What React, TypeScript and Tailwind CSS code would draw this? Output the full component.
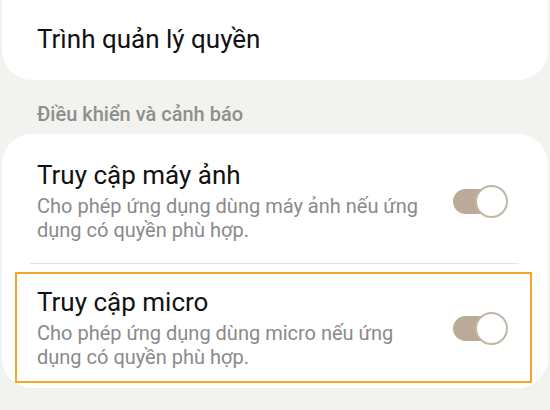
import React from "react";

const Toggle: React.FC = () => (
  <div className="relative w-[55px] h-[33px] shrink-0">
    <div className="absolute left-0 top-[4px] w-[44px] h-[25px] rounded-full bg-[#b9ab96]" />
    <div className="absolute right-0 top-0 w-[33px] h-[33px] rounded-full bg-white border-2 border-[#c2b6a5]" />
  </div>
);

interface RowProps {
  title: string;
  desc: string;
}

const RowContent: React.FC<RowProps> = ({ title, desc }) => (
  <>
    <div className="w-[395px]">
      <div className="text-[26px] leading-[30px] text-[#111111]">{title}</div>
      <div className="mt-[4px] text-[20px] leading-[24px] text-[#8a8a8a]">{desc}</div>
    </div>
    <Toggle />
  </>
);

export default function App() {
  return (
    <div
      className="w-[550px] h-[410px] overflow-hidden bg-[#f2f2ef]"
      style={{ fontFamily: "Roboto, 'Noto Sans', sans-serif" }}
    >
      {/* Permission manager card (top cut off) */}
      <div className="mx-[2px] h-[80px] rounded-b-[30px] bg-white flex items-center pl-[35px] pb-[2px]">
        <span className="text-[26px] text-[#111111]">Trình quản lý quyền</span>
      </div>

      {/* Section header */}
      <div className="pl-[37px] pt-[22px] pb-[8px] text-[20px] leading-[24px] font-medium text-[#8e8e8e]">
        Điều khiển và cảnh báo
      </div>

      {/* Controls card */}
      <div className="mx-[2px] rounded-[30px] bg-white pt-[26px] pb-[5px]">
        <div className="flex items-center justify-between pl-[35px] pr-[40px]">
          <RowContent
            title="Truy cập máy ảnh"
            desc="Cho phép ứng dụng dùng máy ảnh nếu ứng dụng có quyền phù hợp."
          />
        </div>
        <div className="ml-[28px] mr-[29px] mt-[21px] h-px bg-[#e3e3e3]" />
        <div className="ml-[13px] mr-[16px] mt-[8px] border-2 border-[#f4a62a] flex items-center justify-between pl-[20px] pr-[22px] pt-[13px] pb-[12px]">
          <RowContent
            title="Truy cập micro"
            desc="Cho phép ứng dụng dùng micro nếu ứng dụng có quyền phù hợp."
          />
        </div>
      </div>
    </div>
  );
}
